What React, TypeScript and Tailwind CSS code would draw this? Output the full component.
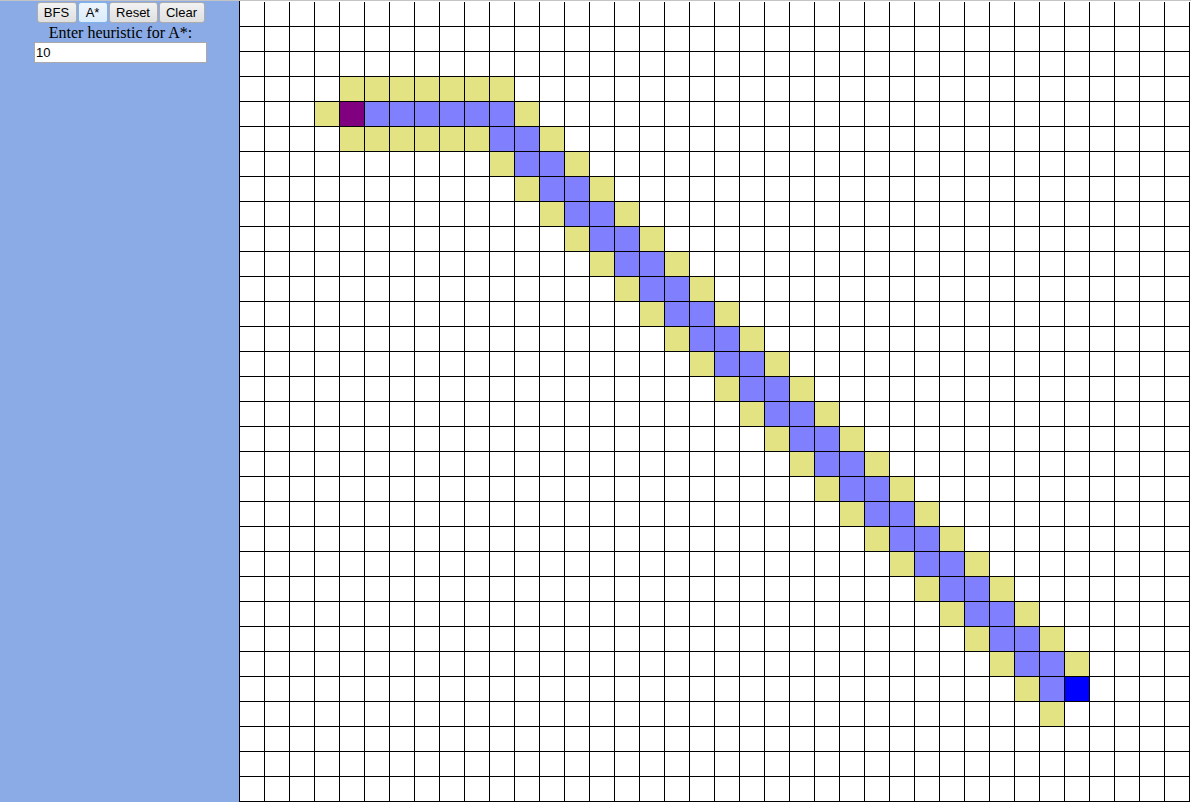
import React from 'react';

const COLS = 38;
const ROWS = 32;

type Kind = 'empty' | 'open' | 'path' | 'start' | 'end';

// builds the explored / path cells of the finished A* run
function buildGrid(): Kind[][] {
  const g: Kind[][] = Array.from({ length: ROWS }, () =>
    Array.from({ length: COLS }, () => 'empty' as Kind)
  );
  for (let c = 4; c <= 10; c++) g[3][c] = 'open';
  g[4][3] = 'open';
  g[4][4] = 'start';
  for (let c = 5; c <= 10; c++) g[4][c] = 'path';
  g[4][11] = 'open';
  for (let c = 4; c <= 8; c++) g[5][c] = 'open';
  for (let r = 5; r <= 26; r++) {
    g[r][r + 4] = 'open';
    g[r][r + 5] = 'path';
    g[r][r + 6] = 'path';
    g[r][r + 7] = 'open';
  }
  g[27][31] = 'open';
  g[27][32] = 'path';
  g[27][33] = 'end';
  g[28][32] = 'open';
  return g;
}

const cellColor: Record<Kind, string> = {
  empty: 'bg-white',
  open: 'bg-[#e3e384]',
  path: 'bg-[#8080ff]',
  start: 'bg-[#800080]',
  end: 'bg-[#0000ff]',
};

function Btn({ label, width, focused }: { label: string; width: string; focused?: boolean }) {
  return (
    <button
      className={`${width} h-[21px] rounded-[3px] border text-[13px] leading-none text-black ${
        focused
          ? 'border-[#7eb4ea] bg-gradient-to-b from-[#eef5fc] to-[#dcecfc]'
          : 'border-[#acacac] bg-gradient-to-b from-[#f2f2f2] to-[#e0e0e0]'
      }`}
      style={{ fontFamily: '"Liberation Sans", Arial, sans-serif' }}
    >
      {label}
    </button>
  );
}

export default function App() {
  const grid = buildGrid();

  return (
    <div className="flex h-[802px] w-[1191px] overflow-hidden border-t border-[#c4c4c4] bg-white">
      {/* Controls */}
      <div className="flex w-[239px] shrink-0 flex-col items-center bg-[#8aabe5] pl-[2px]">
        <div className="flex gap-[1px] pt-[1px]">
          <Btn label="BFS" width="w-[40px]" />
          <Btn label="A*" width="w-[30px]" focused />
          <Btn label="Reset" width="w-[49px]" />
          <Btn label="Clear" width="w-[46px]" />
        </div>
        <p
          className="h-[19px] pt-[1px] text-[16px] leading-[18px] text-black"
          style={{ fontFamily: '"Liberation Serif", "Times New Roman", serif' }}
        >
          Enter heuristic for A*:
        </p>
        <input
          defaultValue="10"
          className="h-[21px] w-[173px] border border-[#a9a9a9] bg-white px-[1px] text-[13px] text-black outline-none"
          style={{ fontFamily: '"Liberation Sans", Arial, sans-serif' }}
        />
      </div>

      {/* Grid */}
      <div className="shrink-0 border-l border-black pt-[1px]">
        <div className="grid grid-cols-[repeat(38,25px)]">
          {grid.map((row, r) =>
            row.map((k, c) => (
              <div
                key={`${r}-${c}`}
                className={`h-[25px] w-[25px] border-r border-b border-black ${cellColor[k]}`}
              />
            ))
          )}
        </div>
      </div>
    </div>
  );
}
